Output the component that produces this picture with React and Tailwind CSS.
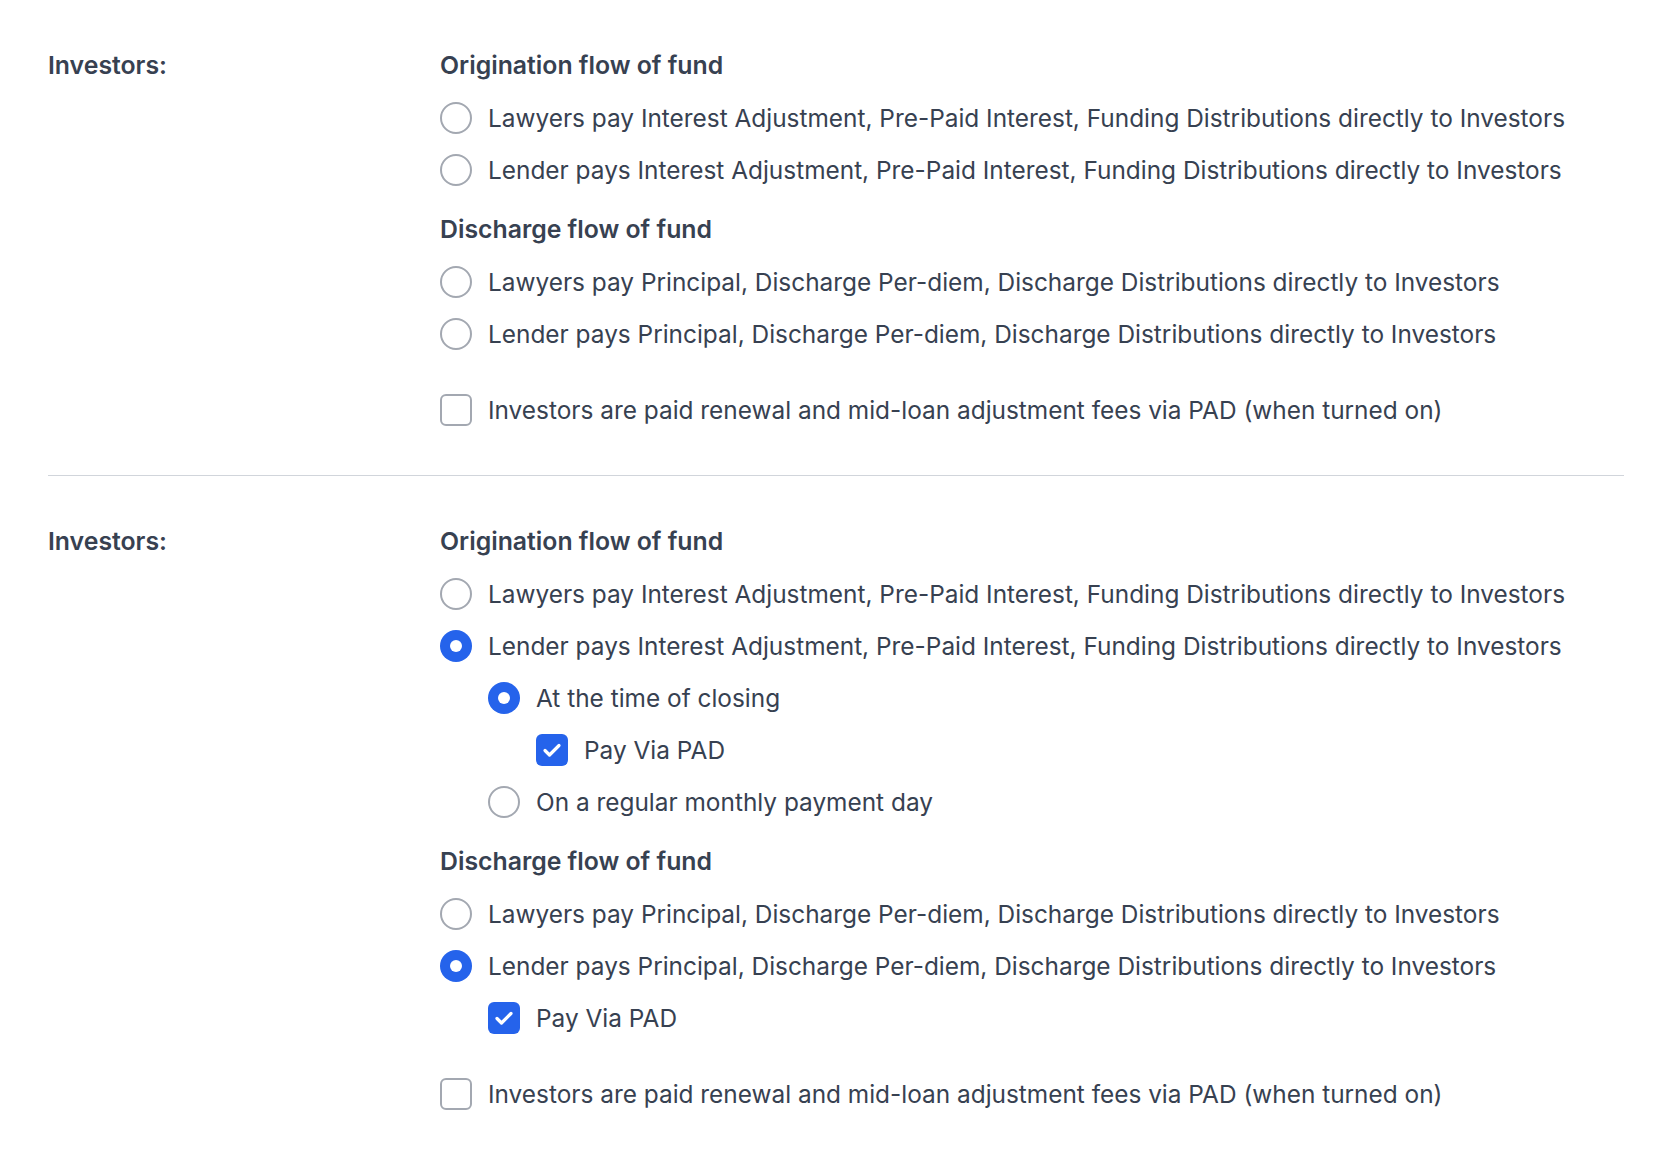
const Radio = ({ checked }) =>
  checked ? (
    <span className="flex h-8 w-8 shrink-0 items-center justify-center rounded-full bg-[#2563eb]">
      <span className="h-3 w-3 rounded-full bg-white" />
    </span>
  ) : (
    <span className="h-8 w-8 shrink-0 rounded-full border-2 border-[#a3a8b1] bg-white" />
  )

const Checkbox = ({ checked }) =>
  checked ? (
    <span className="flex h-8 w-8 shrink-0 items-center justify-center rounded-md bg-[#2563eb]">
      <svg viewBox="0 0 24 24" className="h-6 w-6" fill="none" stroke="white" strokeWidth="3.2" strokeLinecap="round" strokeLinejoin="round">
        <path d="M5 12.5l4.5 4.5L19 7.5" />
      </svg>
    </span>
  ) : (
    <span className="h-8 w-8 shrink-0 rounded-md border-2 border-[#a3a8b1] bg-white" />
  )

const Option = ({ type = "radio", checked, label, indent = 0 }) => (
  <label
    className={
      "flex h-9 items-center gap-4 " +
      (indent === 1 ? "pl-12" : indent === 2 ? "pl-24" : "")
    }
  >
    {type === "radio" ? <Radio checked={checked} /> : <Checkbox checked={checked} />}
    <span>{label}</span>
  </label>
)

const Heading = ({ children, className = "" }) => (
  <h3 className={"flex h-9 items-center text-[24.8px] font-semibold " + className}>{children}</h3>
)

const ORIG_LAWYER = "Lawyers pay Interest Adjustment, Pre-Paid Interest, Funding Distributions directly to Investors"
const ORIG_LENDER = "Lender pays Interest Adjustment, Pre-Paid Interest, Funding Distributions directly to Investors"
const DIS_LAWYER = "Lawyers pay Principal, Discharge Per-diem, Discharge Distributions directly to Investors"
const DIS_LENDER = "Lender pays Principal, Discharge Per-diem, Discharge Distributions directly to Investors"
const FEES = "Investors are paid renewal and mid-loan adjustment fees via PAD (when turned on)"

const Section = ({ expanded, last }) => (
  <div className={"flex pt-[48px] pb-[47px] " + (last ? "" : "border-b border-[#d1d5db]")}>
    <div className="w-[392px] shrink-0">
      <div className="flex h-9 items-center text-[24.8px] font-semibold">Investors:</div>
    </div>
    <div className="flex flex-col gap-4">
      <Heading>Origination flow of fund</Heading>
      <Option label={ORIG_LAWYER} />
      <Option label={ORIG_LENDER} checked={expanded} />
      {expanded && (
        <>
          <Option label="At the time of closing" checked indent={1} />
          <Option type="checkbox" label="Pay Via PAD" checked indent={2} />
          <Option label="On a regular monthly payment day" indent={1} />
        </>
      )}
      <Heading className="mt-[8px]">Discharge flow of fund</Heading>
      <Option label={DIS_LAWYER} />
      <Option label={DIS_LENDER} checked={expanded} />
      {expanded && <Option type="checkbox" label="Pay Via PAD" checked indent={1} />}
      <div className="mt-[24px]">
        <Option type="checkbox" label={FEES} />
      </div>
    </div>
  </div>
)

export default function App() {
  return (
    <div className="min-h-screen bg-white px-12 font-['Inter',sans-serif] text-[24.4px] text-[#374151]">
      <Section />
      <Section expanded last />
    </div>
  )
}
